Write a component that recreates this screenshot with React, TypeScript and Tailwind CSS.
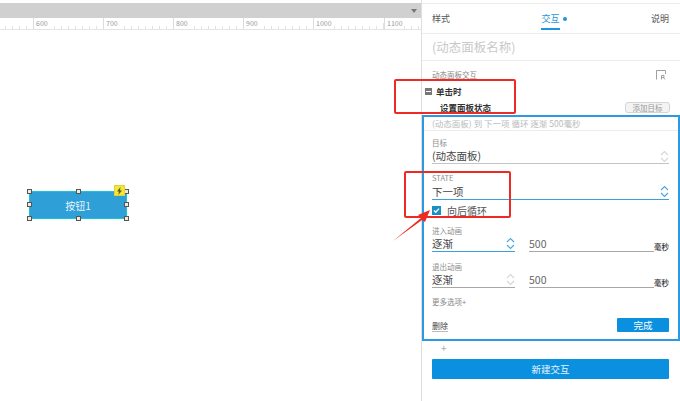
const font = { fontFamily: '"Noto Sans CJK SC", "Open Sans", sans-serif' };

const Handle = ({ className }: { className: string }) => (
  <div className={`absolute w-[5px] h-[5px] bg-[#f3ead8] border border-[#555] ${className}`} />
);

const Chevrons = ({ color }: { color: string }) => (
  <svg width="9" height="13" viewBox="0 0 9 13" fill="none" stroke={color} strokeWidth="1.1">
    <path d="M1 5 L4.5 1.5 L8 5" />
    <path d="M1 8 L4.5 11.5 L8 8" />
  </svg>
);

const labels: [number, string][] = [
  [33, "600"],
  [103, "700"],
  [173, "800"],
  [243, "900"],
  [313, "1000"],
  [384, "1100"],
];

const Ruler = () => (
  <div className="relative h-[12px] border-b border-[#e4e4e4] bg-white overflow-hidden">
    <svg className="absolute left-0 top-0" width="421" height="11" stroke="#e2e2e2" strokeWidth="1">
      {Array.from({ length: 60 }, (_, i) => {
        const x = i * 7 + 5.5;
        const mid = i % 10 === 4;
        return <line key={i} x1={x} x2={x} y1={mid ? 5 : 8} y2={11} />;
      })}
    </svg>
    {labels.map(([x, label]) => (
      <div key={label} className="absolute top-0 h-[11px] border-l border-[#dcdcdc] pl-[2px] bg-white text-[7px] leading-[10px] text-[#9a9a9a]" style={{ left: x }}>
        {label}
      </div>
    ))}
  </div>
);

const Field = ({ label, value, chevron, line, rowHeight, className }: { label: string; value: string; chevron: string; line: string; rowHeight: number; className: string }) => (
  <div className={className}>
    <div className="text-[7.5px] leading-[10px] text-[#8d8d8d]">{label}</div>
    <div className="flex items-center justify-between pt-px text-[10.5px] text-[#444] border-b" style={{ borderColor: line, height: rowHeight }}>
      <span>{value}</span>
      <Chevrons color={chevron} />
    </div>
  </div>
);

const AnimRow = ({ label, chevron, line, className }: { label: string; chevron: string; line: string; className: string }) => (
  <div className={className}>
    <div className="text-[7.5px] leading-[10px] text-[#8d8d8d]">{label}</div>
    <div className="flex items-end h-[16px]">
      <div className="w-[83px] h-[16px] flex items-center justify-between border-b text-[10.5px] text-[#444]" style={{ borderColor: line }}>
        <span>逐渐</span>
        <Chevrons color={chevron} />
      </div>
      <div className="ml-[14px] w-[125px] h-[16px] flex items-center border-b border-[#a8a8a8] text-[10.5px] text-[#666]">500</div>
      <span className="w-[15px] text-[7.5px] font-medium leading-[10px] text-[#333]">毫秒</span>
    </div>
  </div>
);

export default function App() {
  return (
    <div className="relative flex w-[680px] h-[401px] overflow-hidden bg-white" style={font}>
      {/* canvas */}
      <div className="w-[422px] flex flex-col border-r border-[#dedede]">
        <div className="h-[3px] bg-white" />
        <div className="h-[15px] bg-[#d0d0d0] flex items-center justify-end pr-[4px]">
          <div className="w-0 h-0 border-x-[3px] border-x-transparent border-t-[4px] border-t-[#777]" />
        </div>
        <Ruler />
        <div className="flex-1 bg-white" />
      </div>

      {/* button on canvas */}
      <div className="absolute left-[29px] top-[191px] w-[98px] h-[28px] bg-[#2f9fd8] border border-[#19c3dc] flex items-center justify-center text-[10px] text-[#e6f4fb]">
        按钮1
        <Handle className="left-[-3px] top-[-3px]" />
        <Handle className="left-[46px] top-[-3px]" />
        <Handle className="right-[-3px] top-[-3px]" />
        <Handle className="left-[-3px] top-[10px]" />
        <Handle className="right-[-3px] top-[10px]" />
        <Handle className="left-[-3px] bottom-[-3px]" />
        <Handle className="left-[46px] bottom-[-3px]" />
        <Handle className="right-[-3px] bottom-[-3px]" />
        <div className="absolute right-[1px] top-[-7px] w-[11px] h-[11px] bg-[#f5e63c] border border-[#e3d22c] flex items-center justify-center">
          <svg width="7" height="8" viewBox="0 0 7 8" fill="#5a5a2a">
            <path d="M4.5 0 L1 4.4 H3 L2.3 8 L6 3.4 H4 Z" />
          </svg>
        </div>
      </div>

      {/* right panel */}
      <div className="flex-1 flex flex-col min-w-0">
        <div className="mt-[3px] h-[31px] flex items-start justify-between pl-[10px] pr-[11px] pt-[8px] border-y border-t-[#ececec] border-b-[#ececec] text-[9px] leading-[14px] text-[#555]">
          <span>样式</span>
          <span className="relative h-[18px] text-[#1e96dc] border-b-2 border-[#1e96dc]">
            交互
            <span className="absolute right-[-7px] top-[5px] w-[4px] h-[4px] rounded-full bg-[#1e96dc]" />
          </span>
          <span>说明</span>
        </div>
        <div className="h-[27px] border-b border-[#ececec] pl-[10px] flex items-center text-[12.5px] text-[#c9c9c9]">(动态面板名称)</div>
        <div className="relative pl-[10px] pr-[10px] h-[54px]">
          <div className="pt-[9px] text-[7.5px] leading-[10px] text-[#888]">动态面板交互</div>
          <svg className="absolute right-[13px] top-[9px]" width="11" height="10" viewBox="0 0 11 10" fill="none" stroke="#888" strokeWidth="0.8">
            <path d="M0.5 9.5 V0.5 H9.5 V4" />
            <path d="M5.5 5.5 V9.5 M5.5 5.5 H8 V7.5 H5.5 M7.5 7.5 L9 9.5" />
          </svg>
          <div className="flex items-center mt-[4px] h-[14px]">
            <div className="ml-[-7px] w-[7px] h-[7px] bg-[#777] flex items-center justify-center">
              <div className="w-[5px] h-px bg-white" />
            </div>
            <span className="ml-[4px] text-[8.5px] font-bold text-[#333]">单击时</span>
          </div>
          <div className="flex items-center justify-between mt-[2px] h-[14px] pl-[8px]">
            <span className="text-[8.5px] font-bold text-[#333]">设置面板状态</span>
            <span className="w-[45px] h-[11px] rounded-[3px] border border-[#d4d4d4] bg-[#f4f4f4] text-[7.5px] leading-[9px] text-center text-[#999]">添加目标</span>
          </div>
        </div>

        {/* blue box */}
        <div className="w-[258px] h-[226px] border-2 border-[#2a9be0] pl-[8px] pr-[9px] flex flex-col">
          <div className="h-[14px] ml-[-8px] mr-[-9px] pl-[8px] border-b border-[#ececec] text-[8.5px] leading-[12px] text-[#bbb]">(动态面板) 到 下一项 循环 逐渐 500毫秒</div>
          <Field label="目标" value="(动态面板)" chevron="#d6d6d6" line="#c4c4c4" rowHeight={16} className="mt-[7px]" />
          <Field label="STATE" value="下一项" chevron="#4aa6e0" line="#3aa0de" rowHeight={17} className="mt-[9px]" />
          <label className="flex items-center h-[14px] mt-[3px]">
            <span className="w-[9px] h-[9px] bg-[#1a8fc4] flex items-center justify-center">
              <svg width="7" height="7" viewBox="0 0 7 7" fill="none" stroke="#fff" strokeWidth="1.4">
                <path d="M1 3.5 L2.8 5.3 L6 1.6" />
              </svg>
            </span>
            <span className="ml-[6px] text-[10px] text-[#555]">向后循环</span>
          </label>
          <AnimRow label="进入动画" chevron="#4aa6e0" line="#3aa0de" className="mt-[9px]" />
          <AnimRow label="退出动画" chevron="#d6d6d6" line="#a8a8a8" className="mt-[10px]" />
          <div className="mt-[9px] text-[7.5px] leading-[10px] text-[#888]">更多选项+</div>
          <div className="flex items-center justify-between mt-[10px]">
            <span className="mt-[4px] text-[8px] text-[#444] border-b border-[#bbb] leading-[10px]">删除</span>
            <span className="w-[52px] h-[14px] rounded-[1px] bg-[#0b90e0] text-[9.5px] leading-[14px] text-center text-white">完成</span>
          </div>
        </div>

        <div className="h-[18px] pl-[19px] text-[10px] leading-[14px] text-[#aaa]">+</div>
        <div className="ml-[10px] w-[237px] h-[20px] rounded-[1px] bg-[#0b90e0] text-[9.5px] leading-[20px] text-center text-[#e8f5fd]">新建交互</div>
      </div>

      {/* red annotations */}
      <div className="absolute left-[394px] top-[79px] w-[122px] h-[35px] border-2 border-[#ee2a24] rounded-[2px]" />
      <div className="absolute left-[404px] top-[171px] w-[107px] h-[47px] border-2 border-[#ee2a24] rounded-[2px]" />
      <svg className="absolute left-[385px] top-[205px]" width="50" height="40" viewBox="0 0 50 40">
        <path d="M8 36 L36 13 L33 10 L45 5 L40 17 L37 15 Z" fill="#ee2a24" />
      </svg>
    </div>
  );
}
